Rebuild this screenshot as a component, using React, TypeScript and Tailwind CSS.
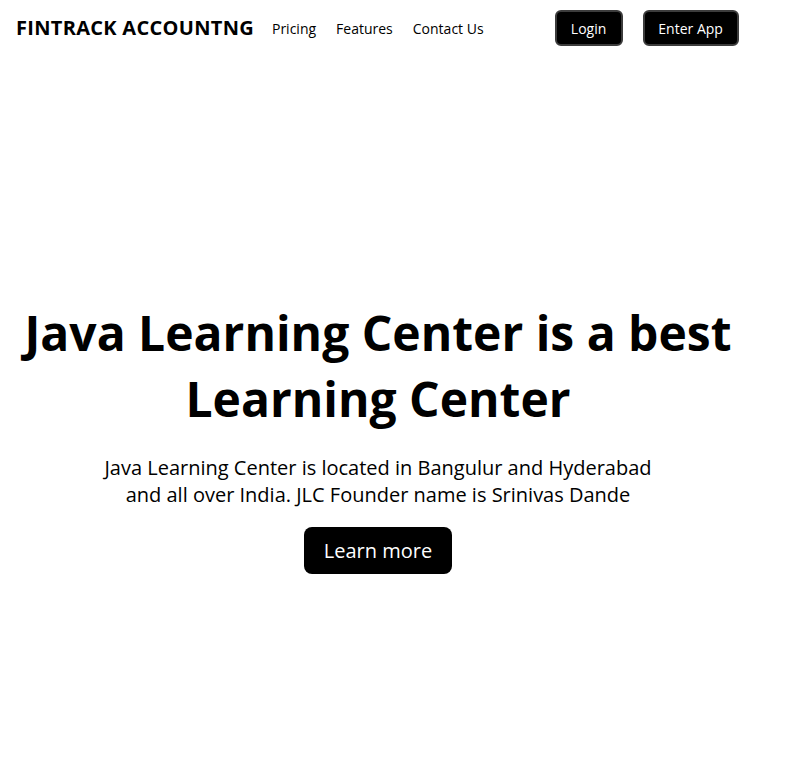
import React from 'react';

const NavBar: React.FC = () => {
  return (
    <header className="h-[56px] flex items-center pl-4">
      <div className="flex items-center">
        <h1 className="text-[20px] font-bold text-black tracking-[0.3px]">FINTRACK ACCOUNTNG</h1>
        <nav className="flex items-center gap-5 ml-[18px] text-[14px] text-black">
          <a href="#">Pricing</a>
          <a href="#">Features</a>
          <a href="#">Contact Us</a>
        </nav>
      </div>
      <div className="flex items-center gap-5 ml-[71px]">
        <button className="h-[36px] w-[68px] bg-black text-white text-[14px] rounded-md border-2 border-[#3c3c3c]">
          Login
        </button>
        <button className="h-[36px] w-[96px] bg-black text-white text-[14px] rounded-md border-2 border-[#3c3c3c]">
          Enter App
        </button>
      </div>
    </header>
  );
};

const Hero: React.FC = () => {
  return (
    <section className="w-[756px] flex flex-col items-center text-center pt-[244px]">
      <h2 className="text-[48px] font-bold leading-[66px] text-black">
        Java Learning Center is a best Learning Center
      </h2>
      <p className="mt-[22px] text-[20px] leading-[27px] text-black w-[560px]">
        Java Learning Center is located in Bangulur and Hyderabad and all over India. JLC Founder name is Srinivas Dande
      </p>
      <button className="mt-[19px] h-[47px] px-[20px] bg-black text-white text-[20px] rounded-lg">
        Learn more
      </button>
    </section>
  );
};

export default function App() {
  return (
    <div className="min-h-screen bg-white" style={{ fontFamily: '"Open Sans", sans-serif' }}>
      <NavBar />
      <Hero />
    </div>
  );
}
